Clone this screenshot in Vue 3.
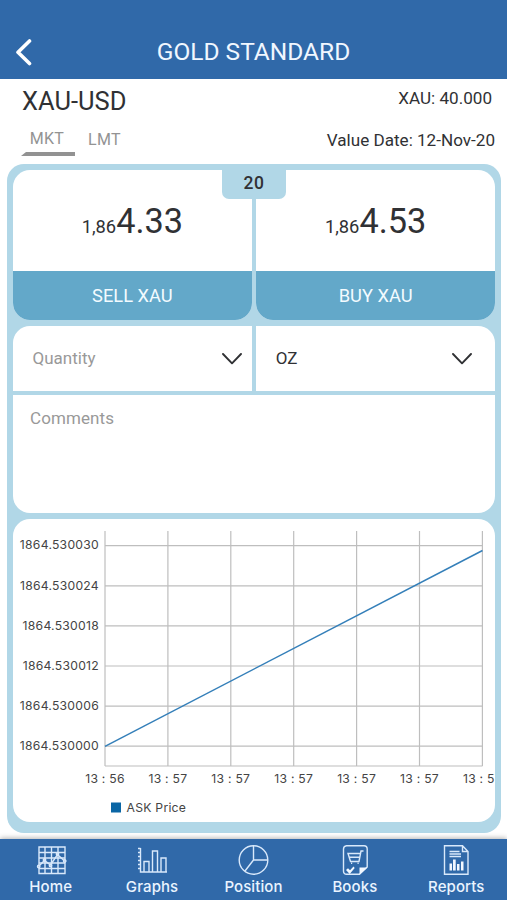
<template>
  <div class="screen">
    <header class="top-bar">
      <svg class="back" viewBox="0 0 18 28" width="18" height="28">
        <path d="M14.5 3 L3 14.3 L14.5 25.5" />
      </svg>
      <h1>GOLD STANDARD</h1>
    </header>

    <section class="summary">
      <div class="summary-left">
        <h2>XAU-USD</h2>
        <div class="tabs">
          <button class="tab active">MKT</button>
          <button class="tab">LMT</button>
        </div>
      </div>
      <div class="summary-right">
        <span class="balance">XAU: 40.000</span>
        <span>Value Date: 12-Nov-20</span>
      </div>
    </section>

    <main class="panel">
      <div class="quotes">
        <div v-for="quote in quotes" :key="quote.label" class="quote">
          <div class="price">
            <span class="small">{{ quote.prefix }}</span
            ><span class="big">{{ quote.value }}</span>
          </div>
          <button class="trade">{{ quote.label }}</button>
        </div>
        <div class="spread">20</div>
      </div>

      <div class="form">
        <div class="selects">
          <div class="select placeholder">
            <span>Quantity</span>
            <svg class="chevron" viewBox="0 0 20 12" width="20" height="12">
              <path d="M1 1 L10 10.3 L19 1" />
            </svg>
          </div>
          <div class="select unit">
            <span>OZ</span>
            <svg class="chevron" viewBox="0 0 20 12" width="20" height="12">
              <path d="M1 1 L10 10.3 L19 1" />
            </svg>
          </div>
        </div>
        <div class="comments">Comments</div>
      </div>

      <div class="chart">
        <svg viewBox="0 0 482 303" width="482" height="303">
          <g class="grid">
            <line v-for="x in columns" :key="x" :x1="x" y1="12" :x2="x" y2="247" />
            <line
              v-for="row in rows"
              :key="row.label"
              x1="92"
              :y1="row.y"
              x2="469.5"
              :y2="row.y"
            />
            <line x1="92" y1="247" x2="469.5" y2="247" />
          </g>
          <path class="ask" d="M92 227.3 L469.5 31.5" />
          <g class="labels">
            <text
              v-for="row in rows"
              :key="row.label"
              x="86"
              :y="row.y + 3.7"
              text-anchor="end"
            >
              {{ row.label }}
            </text>
            <text
              v-for="(x, i) in columns"
              :key="x"
              :x="x"
              y="264"
              text-anchor="middle"
            >
              {{ i === 0 ? "13 : 56" : "13 : 57" }}
            </text>
            <text x="113.5" y="293">ASK Price</text>
          </g>
          <rect class="legend" x="98" y="283.5" width="10" height="10" />
        </svg>
      </div>
    </main>

    <nav class="nav">
      <a v-for="item in nav" :key="item.label" class="nav-item">
        <svg viewBox="0 0 32 32" width="32" height="32">
          <path v-for="d in item.lines" :key="d" :d="d" />
          <path v-for="d in item.fills" :key="d" :d="d" class="solid" />
        </svg>
        <span>{{ item.label }}</span>
      </a>
    </nav>
  </div>
</template>

<script setup>
const quotes = [
  { prefix: "1,86", value: "4.33", label: "SELL XAU" },
  { prefix: "1,86", value: "4.53", label: "BUY XAU" },
];

const rows = ["30", "24", "18", "12", "06", "00"].map((end, i) => ({
  label: "1864.5300" + end,
  y: 26.7 + i * 40.1,
}));

const columns = [0, 1, 2, 3, 4, 5, 6].map((i) => 92 + i * 62.9);

const nav = [
  {
    label: "Home",
    lines: [
      "M4 3H30V29.5H4Z M4 8.5H30 M4 14H30 M4 19H30 M4 24.5H30 M10 3V29.5 M16.5 3V29.5 M23 3V29.5",
      "M4 22L9.5 16.5L15.5 21L22.5 10.5L29 16.5",
      "M2.5 22.5a1.2 1.2 0 1 0 2.4 0a1.2 1.2 0 1 0-2.4 0 M8.3 16a1.2 1.2 0 1 0 2.4 0a1.2 1.2 0 1 0-2.4 0 M14.3 21.5a1.2 1.2 0 1 0 2.4 0a1.2 1.2 0 1 0-2.4 0 M21.3 10a1.2 1.2 0 1 0 2.4 0a1.2 1.2 0 1 0-2.4 0 M28.5 17a1.2 1.2 0 1 0 2.4 0a1.2 1.2 0 1 0-2.4 0",
    ],
  },
  {
    label: "Graphs",
    lines: [
      "M4.5 4V28H31 M2 4.5H4.5 M2 8.5H4.5 M2 12.5H4.5 M2 16.5H4.5 M2 20.5H4.5 M2 24.5H4.5",
      "M8 28V17.5H13V28 M16.5 28V7H21.5V28 M25 28V14H30V28",
    ],
  },
  {
    label: "Position",
    lines: [
      "M16.5 1.7a14.3 14.3 0 1 0 0 28.6a14.3 14.3 0 1 0 0-28.6Z",
      "M16.5 1.7V16H30.8 M16.5 16L7.8 27.3",
    ],
  },
  {
    label: "Books",
    lines: [
      "M7.5 1.7H25a3.2 3.2 0 0 1 3.2 3.2V23L20.5 30.3H7.5A3 3 0 0 1 4.5 27.3V5A3.3 3.3 0 0 1 7.5 1.7Z",
      "M24.5 7H22L20 17.5H11.5L9 9.5H21 M10.2 13.2H20.5",
      "M12 19.3h1.2 M18.5 19.3h1.2",
    ],
    fills: [
      "M20.5 30.5V23.5H28.5Z",
      "M7 26L9 24.2L11 26.3L14.5 22.5L15.7 24L10.7 30Z",
    ],
  },
  {
    label: "Reports",
    lines: [
      "M4.5 1.7H22.5L28 7.5V30.3H4.5Z M22.5 1.7V7.5H28",
      "M9.5 7.5H19.5 M9.5 10H21 M9.5 12.5H21",
    ],
    fills: [
      "M9.5 19.5H12V26.5H9.5Z M13 15.5H15.7V26.5H13Z M17 20H19.5V26.5H17Z M21 17.5H23.5V26.5H21Z",
    ],
  },
];
</script>

<style>
body {
  margin: 0;
}
</style>

<style scoped>
.screen {
  width: 507px;
  height: 900px;
  display: flex;
  flex-direction: column;
  overflow: hidden;
  background: #fff;
  color: #303134;
  font-family: Roboto, sans-serif;
}
button {
  padding: 0;
  border: 0;
  background: none;
  font-family: inherit;
}
h1,
h2 {
  margin: 0;
  font-weight: 400;
}
.top-bar {
  flex: none;
  box-sizing: border-box;
  height: 79px;
  padding: 25px 15px 0;
  display: grid;
  grid-template-columns: 18px 1fr 18px;
  align-items: center;
  background: #3069a9;
  color: #f0f7ff;
}
.back path {
  fill: none;
  stroke: #fff;
  stroke-width: 3.6;
  stroke-linecap: round;
  stroke-linejoin: round;
}
.top-bar h1 {
  font-size: 24.5px;
  line-height: 30px;
  text-align: center;
}
.summary {
  flex: none;
  box-sizing: border-box;
  height: 85px;
  padding: 7px 12px 0 22px;
  display: flex;
  justify-content: space-between;
}
.summary h2 {
  font-size: 25.5px;
  line-height: 31px;
}
.tabs {
  display: flex;
  margin-top: 12px;
  margin-left: -1px;
}
.tab {
  width: 54px;
  height: 27px;
  padding-bottom: 7px;
  box-sizing: border-box;
  font-size: 16px;
  line-height: 19px;
  letter-spacing: 0.3px;
  color: #939393;
}
.tab + .tab {
  width: 59px;
}
.tab.active {
  border-bottom: 4px solid #929292;
  border-left: 5px solid transparent;
  padding: 0 7px 4px 0;
}
.summary-right {
  display: flex;
  flex-direction: column;
  align-items: flex-end;
  font-size: 17.1px;
  line-height: 22px;
  gap: 20px;
  padding-top: 1px;
}
.balance {
  padding-right: 3px;
}
.panel {
  flex: none;
  box-sizing: border-box;
  width: 494px;
  height: 669px;
  margin-left: 7px;
  padding: 5.5px 6px 0;
  display: flex;
  flex-direction: column;
  gap: 6px;
  border-radius: 17px;
  background: #b1d7e7;
}
.quotes {
  position: relative;
  display: grid;
  grid-template-columns: 1fr 1fr;
  gap: 4.5px;
  height: 150px;
}
.quote {
  display: flex;
  flex-direction: column;
  overflow: hidden;
  border-radius: 17px;
  background: #fff;
}
.price {
  flex: 1;
  display: flex;
  align-items: baseline;
  justify-content: center;
  padding-top: 30px;
}
.small {
  font-size: 18.3px;
}
.big {
  font-size: 34.3px;
  line-height: 42px;
}
.trade {
  height: 49px;
  padding-top: 1px;
  background: #63a8c9;
  color: #f3fbff;
  font-size: 18.3px;
}
.spread {
  position: absolute;
  top: -1px;
  left: 209px;
  width: 64px;
  height: 30px;
  border-radius: 0 0 7px 7px;
  background: #b1d7e7;
  font: 500 17.5px/28px Roboto, sans-serif;
  letter-spacing: 0.6px;
  text-align: center;
}
.form {
  display: flex;
  flex-direction: column;
  gap: 4.5px;
  height: 187px;
  border-radius: 17px;
  overflow: hidden;
}
.selects {
  display: grid;
  grid-template-columns: 1fr 1fr;
  gap: 4.5px;
  height: 65px;
}
.select {
  display: flex;
  align-items: center;
  justify-content: space-between;
  padding: 0 10px 0 19.5px;
  background: #fff;
  font-size: 17px;
}
.select.unit {
  padding-right: 23px;
}
.select.placeholder,
.comments {
  color: #999;
}
.chevron {
  margin-top: 1px;
}
.chevron path {
  fill: none;
  stroke: #303134;
  stroke-width: 1.9;
  stroke-linecap: round;
  stroke-linejoin: round;
}
.comments {
  flex: 1;
  padding: 12px 17px;
  background: #fff;
  font-size: 17px;
  line-height: 22px;
  letter-spacing: 0.1px;
}
.chart {
  height: 303px;
  overflow: hidden;
  border-radius: 17px;
  background: #fff;
}
.chart svg {
  display: block;
}
.grid line {
  stroke: #bebebe;
  stroke-width: 1.2;
}
.ask {
  fill: none;
  stroke: #347fb9;
  stroke-width: 1.5;
}
.labels {
  font-family: Inter, sans-serif;
  font-size: 12.2px;
  letter-spacing: 0.25px;
  fill: #444;
}
.legend {
  fill: #0a66a5;
}
.nav {
  flex: 1;
  margin-top: 6px;
  display: grid;
  grid-template-columns: repeat(5, 1fr);
  background: #3069a9;
  box-shadow: 0 -1px 5px rgba(0, 0, 0, 0.3);
}
.nav-item {
  display: flex;
  flex-direction: column;
  align-items: center;
  padding-top: 5px;
  color: #eaf4ff;
  font: 500 15px/21px Inter, sans-serif;
  letter-spacing: 0.1px;
}
.nav-item svg {
  fill: none;
  stroke: #d9e9fb;
  stroke-width: 1.4;
}
.nav-item .solid {
  fill: #f2f8ff;
  stroke: none;
}
</style>
